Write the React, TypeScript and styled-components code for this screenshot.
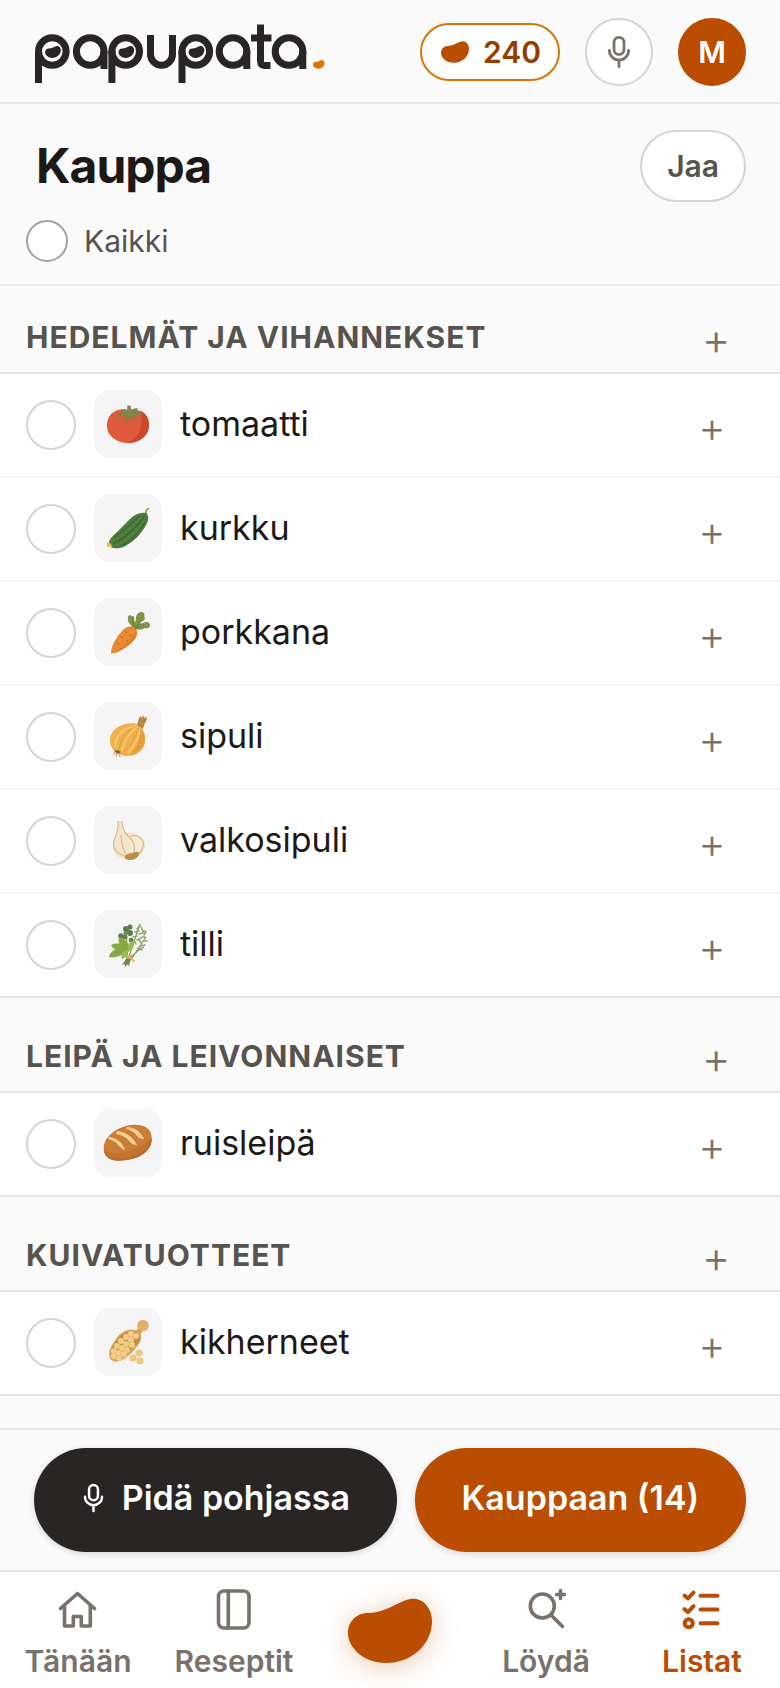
import React from "react";
import styled, { createGlobalStyle } from "styled-components";

const color = {
  page: "#fafafa",
  surface: "#ffffff",
  ink: "#1c1917",
  inkSoft: "#57534e",
  inkMuted: "#79716b",
  line: "#e5e5e5",
  lineFaint: "#f5f5f4",
  control: "#d6d3d1",
  brand: "#bb4d00",
  brandDark: "#973c00",
  amber: "#d97706",
  dark: "#292524",
};

const GlobalStyle = createGlobalStyle`
  *, *::before, *::after { box-sizing: border-box; }
  body {
    margin: 0;
    background: ${color.page};
    color: ${color.ink};
    font-family: Inter, "Noto Sans", sans-serif;
    -webkit-font-smoothing: antialiased;
  }
  h1, h2, ul { margin: 0; padding: 0; }
  button { font: inherit; cursor: pointer; }
`;

/* ---------- Layout ---------- */

const Screen = styled.div`
  display: flex;
  flex-direction: column;
  min-height: 100vh;
`;

const TopBar = styled.header`
  display: flex;
  align-items: center;
  justify-content: space-between;
  padding: 18px 34px 16px;
  border-bottom: 2px solid ${color.line};
`;

const TopActions = styled.div`
  display: flex;
  align-items: center;
  gap: 25px;
`;

const LogoLink = styled.a`
  display: block;
  line-height: 0;
`;

const PointsButton = styled.button`
  display: flex;
  align-items: center;
  gap: 14px;
  height: 58px;
  padding: 0 17px 0 19px;
  border: 2px solid ${color.amber};
  border-radius: 29px;
  background: ${color.surface};
  color: ${color.brandDark};
  font-size: 30px;
  font-weight: 600;
  line-height: 36px;
`;

const RoundButton = styled.button<{ $filled?: boolean }>`
  display: grid;
  place-items: center;
  width: 68px;
  height: 68px;
  padding: 0;
  border: 2px solid ${(p) => (p.$filled ? color.brand : color.control)};
  border-radius: 50%;
  background: ${(p) => (p.$filled ? color.brand : color.surface)};
  color: ${(p) => (p.$filled ? color.surface : color.inkMuted)};
  font-size: 30px;
  font-weight: 600;
  line-height: 36px;
`;

const TitleArea = styled.section`
  padding: 26px 34px 22px 26px;
  border-bottom: 2px solid #ececec;
`;

const TitleRow = styled.div`
  display: flex;
  align-items: center;
  justify-content: space-between;
  padding-left: 10px;
`;

const Title = styled.h1`
  font-size: 48px;
  font-weight: 700;
  line-height: 56px;
  letter-spacing: -1px;
`;

const ShareButton = styled.button`
  height: 72px;
  padding: 0 25px;
  border: 2px solid ${color.control};
  border-radius: 36px;
  background: ${color.surface};
  color: ${color.inkSoft};
  font-size: 30px;
  font-weight: 600;
  line-height: 36px;
`;

const SelectAll = styled.label`
  display: inline-flex;
  align-items: center;
  gap: 16px;
  margin-top: 18px;
  color: ${color.inkSoft};
  font-size: 30px;
  line-height: 42px;
  vertical-align: top;
`;

const Tick = styled.input<{ $small?: boolean }>`
  appearance: none;
  flex: none;
  width: ${(p) => (p.$small ? 42 : 50)}px;
  height: ${(p) => (p.$small ? 42 : 50)}px;
  margin: 0;
  border: 2px solid ${(p) => (p.$small ? "#a6a09b" : color.control)};
  border-radius: 50%;
  background: ${color.surface};
  &:checked { background: ${color.brand}; border-color: ${color.brand}; }
`;

const Main = styled.main`
  flex: 1;
`;

const GroupHeader = styled.div`
  display: flex;
  align-items: center;
  justify-content: space-between;
  padding: 38px 42px 15px 26px;
  border-bottom: 2px solid ${color.line};
  section:first-of-type > & { padding-top: 31px; }
`;

const GroupTitle = styled.h2`
  color: ${color.inkSoft};
  font-size: 30px;
  font-weight: 700;
  line-height: 36px;
  letter-spacing: 1px;
  text-transform: uppercase;
`;

const AddButton = styled.button<{ $large?: boolean }>`
  width: 44px;
  padding: 4px 0 0;
  border: 0;
  background: none;
  color: ${color.inkMuted};
  font-size: ${(p) => (p.$large ? 44 : 42)}px;
  font-weight: 300;
  line-height: 36px;
`;

const Items = styled.ul`
  list-style: none;
  background: ${color.surface};
`;

const Item = styled.li`
  display: flex;
  align-items: center;
  gap: 18px;
  height: 104px;
  padding: 0 46px 0 26px;
  border-bottom: 2px solid ${color.lineFaint};
  &:last-child { border-bottom-color: ${color.line}; }
`;

const ItemLabel = styled.label`
  flex: 1;
  display: flex;
  align-items: center;
  gap: 18px;
  padding-bottom: 2px;
  font-size: 34px;
  line-height: 44px;
`;

const Thumb = styled.span`
  width: 68px;
  height: 68px;
  border-radius: 16px;
  background: #f5f5f5;
  line-height: 0;
`;

const BottomDock = styled.div`
  position: sticky;
  bottom: 0;
  background: ${color.page};
`;

const ActionBar = styled.div`
  display: flex;
  gap: 18px;
  padding: 18px 34px;
  border-top: 2px solid ${color.line};
`;

const ActionButton = styled.button<{ $dark?: boolean }>`
  flex: 1 1 auto;
  display: flex;
  align-items: center;
  justify-content: center;
  gap: 16px;
  height: 104px;
  padding: 0 30px 4px;
  border: 0;
  border-radius: 52px;
  background: ${(p) => (p.$dark ? color.dark : color.brand)};
  color: ${color.surface};
  font-size: 34px;
  font-weight: 600;
  line-height: 44px;
  box-shadow: 0 2px 6px rgba(0, 0, 0, 0.14);
`;

const TabBar = styled.nav`
  display: grid;
  grid-template-columns: repeat(5, 1fr);
  overflow: hidden;
  background: ${color.surface};
  border-top: 2px solid ${color.line};
`;

const Tab = styled.a<{ $active?: boolean }>`
  display: flex;
  flex-direction: column;
  align-items: center;
  gap: 9px;
  padding: 14px 0 9px;
  color: ${(p) => (p.$active ? color.brand : color.inkMuted)};
  font-size: 30px;
  font-weight: 600;
  line-height: 36px;
  text-decoration: none;
`;

const BeanTab = styled.a`
  display: grid;
  place-items: center;
  padding-top: 2px;
  svg { filter: drop-shadow(0 4px 14px rgba(187, 77, 0, 0.3)); }
`;

/* ---------- Icons ---------- */

const BEAN =
  "M20 15 C34 15 46 7 57 2.500 C72 -4 84 8 84 23 C84 46 64 65 38 65 C16 65 0 50 0 35 C0 24 8 15 20 15 Z";

const Bean = ({ width, height }: { width: number; height: number }) => (
  <svg width={width} height={height} viewBox="0 0 84 66" fill={color.brand} aria-hidden="true">
    <path d={BEAN} />
  </svg>
);

const BowlRing = ({ x }: { x: number }) => <circle cx={x} cy="51.500" r="13.800" />;

const BeanSpot = ({ x }: { x: number }) => (
  <path d={BEAN} transform={`translate(${x - 7.2} 45.800) scale(.187)`} fill="currentColor" stroke="none" />
);

const Logo = () => (
  <svg width="292" height="64" viewBox="34 20 292 64" role="img" aria-label="papupata" color={color.dark}>
    <clipPath id="cup">
      <rect x="146" y="35" width="32" height="36" />
    </clipPath>
    <clipPath id="foot">
      <rect x="257" y="61" width="7" height="8" />
    </clipPath>
    <g fill="none" stroke="currentColor" strokeWidth="7">
      {[52.3, 125.7, 195.8].map((x) => (
        <g key={x}>
          <BowlRing x={x} />
          <line x1={x - 13.8} x2={x - 13.8} y1="51" y2="83" />
          <BeanSpot x={x} />
        </g>
      ))}
      {[90.2, 233, 289].map((x) => (
        <g key={x}>
          <BowlRing x={x} />
          <line x1={x + 13.8} x2={x + 13.8} y1="51" y2="69" />
        </g>
      ))}
      <rect x="150.500" y="10" width="22" height="55.300" rx="11" clipPath="url(#cup)" />
      <line x1="260.500" x2="260.500" y1="24.500" y2="62" />
      <line x1="251" x2="271.500" y1="38" y2="38" />
      <line x1="263.500" x2="270.500" y1="65.500" y2="65.500" />
      <circle cx="263.500" cy="62.500" r="3" strokeWidth="6.500" clipPath="url(#foot)" />
    </g>
    <path d={BEAN} transform="translate(313 59.800) scale(.137)" fill={color.amber} />
  </svg>
);

const Mic = ({ width, height }: { width: number; height: number }) => (
  <svg width={width} height={height} viewBox="4 0 28 36" fill="none" stroke="currentColor" strokeWidth="2.800" strokeLinecap="round" aria-hidden="true">
    <rect x="13" y="3.400" width="10" height="17" rx="5" />
    <path d="M8.400 16.500a9.600 9.600 0 0 0 19.200 0M18 26.500v6" />
  </svg>
);

const TabIcon = ({ children }: { children: React.ReactNode }) => (
  <svg width="48" height="48" viewBox="0 0 48 48" fill="none" stroke="currentColor" strokeWidth="3.600" strokeLinecap="round" strokeLinejoin="round" aria-hidden="true">
    {children}
  </svg>
);

const HomeIcon = () => (
  <TabIcon>
    <path d="M6.500 22.500 23.500 7.500l17 15M10.500 20v20h8.800V30.500h8V40h9V20" />
  </TabIcon>
);

const BookIcon = () => (
  <TabIcon>
    <rect x="8.500" y="5" width="30.500" height="37" rx="5.500" />
    <path d="M18.300 5v37" />
  </TabIcon>
);

const DiscoverIcon = () => (
  <TabIcon>
    <circle cx="20.300" cy="20" r="12" />
    <path d="M29.500 29.500 40.500 40.500M38.500 4.500v8M34.500 8.500h8" />
  </TabIcon>
);

const ListIcon = () => (
  <TabIcon>
    <g strokeWidth="4">
      <path d="M6.500 9.500l3.500 3 5.500-6M6.500 23.200l3.500 3 5.500-6M22.500 9.800h17M22.500 23.500h17M22.500 37.300h17" />
      <circle cx="10.700" cy="37.300" r="4" />
    </g>
  </TabIcon>
);

/* ---------- Food drawings ---------- */

const FoodSvg = ({ children }: { children: React.ReactNode }) => (
  <svg width="68" height="68" viewBox="0 0 68 68" aria-hidden="true">
    {children}
  </svg>
);

const Tomato = () => (
  <FoodSvg>
    <path d="M34 20c-6-2-21 0-21 16 0 10 10 17 21 17s21-7 21-18c0-14-14-17-21-15z" fill="#df5a3b" />
    <path d="M46 20.500c7 3 9 9 9 14.500 0 11-10 18-21 18 11-5 17-19 12-32.500z" fill="#cc482d" />
    <path d="M33.500 15.500h3l.5 4.500c3-1.500 5-2 7-1.500l-1.500 2.500c3 0 6 1 7 3.500-4-.5-6 0-7.500.5l-.5 1.500 1.500 4.500c-3-1-5-3-6-5l-5.500 8c-1-3 0-6 .5-8-4-.5-8 .5-11 2.500 1-4 5-6 8-6l-2-2.500c2-1 4-.5 6 .5z" fill="#7c8648" />
  </FoodSvg>
);

const Cucumber = () => (
  <FoodSvg>
    <path d="M52 20c0-4 0-4 3-5.500" stroke="#8fa15c" strokeWidth="1.800" fill="none" />
    <path d="M15 49c0-4 4-7 8-11l13-13c5-5 11-7 16-6 3 2 3 7 0 12-5 9-10 14-16 18-7 5-12 6-16 5-3 0-5-2-5-5z" fill="#4d7c3d" />
    <path d="M19 50c9-4 25-17 32-29M20 43c8-4 17-14 26-21M27 52c9-4 18-13 24-24" stroke="#386531" strokeWidth="1.100" fill="none" />
    <g stroke="#7da05d" strokeWidth="1" strokeDasharray="1 4" fill="none">
      <path d="M19 47c9-5 22-16 29-25" />
      <path d="M23 51c9-4 21-14 27-25" />
    </g>
    <path d="M13 48.500l4 1 1.500 4-4-1-1.500.5z" fill="#e3bd45" />
  </FoodSvg>
);

const Carrot = () => (
  <FoodSvg>
    <g fill="#82934a">
      <path d="M40 31c-2-4-7-6-6-10-1-3 2-5 4-3 2 0 3 2 2 4 2 3 2 6 2 9z" />
      <path d="M41 31c-1-5 1-8 1-11 0-4 3-6 5-6 3 0 4 2 3 4 2 3 0 5-3 6-2 3-3 5-5 7z" />
      <path d="M41 31c2-3 4-6 8-6 3-2 7-1 7 2 0 3-3 4-5 3-3 2-7 2-10 1z" />
    </g>
    <path d="M17 55.500c0-7 4-14 9-20 3-4 6-7 10-7 4-1 7 3 7 7-1 6-6 10-12 14-4 3-9 6-14 6z" fill="#e98b31" />
    <path d="M41 30c2 4 0 9-5 13-4 4-11 9-16 11.500 8-1 22-11 23-19 0-2-1-4.500-2-5.500z" fill="#dc7826" />
    <path d="M30 33l3 2M26 38l3 2M34 44l-2-2M23 45l2 1.500M38 39l-2-2" stroke="#c0651f" strokeWidth="1" strokeLinecap="round" />
    <path d="M41 31l6-9M41 31l9-4M40 29l-2-8" stroke="#64753a" strokeWidth=".8" />
  </FoodSvg>
);

const Onion = () => (
  <FoodSvg>
    <path d="M22 49l-3 4M23 50l-1 5M25 50l1 5M26 50l2 3" stroke="#a97e58" strokeWidth=".8" />
    <path d="M42 24c2-2 2-6 4-10l2 2 1-3 1 3 3-1c0 4-3 7-4 12z" fill="#b98543" />
    <path d="M42 21.500c-8-1-15 1-20 5-6 5-8 12-4 19 3 7 12 10 20 8 9-2 14-10 13-17 0-4-1-6-3-9z" fill="#f0b04c" />
    <path d="M48 27c3 5 3 8 3 10-1 9-7 15-15 16 7-6 11-15 12-26z" fill="#e39f3c" />
    <g fill="none" stroke="#f8c871" strokeWidth="1.800">
      <path d="M42 24c-12 1-21 10-21 21" />
      <path d="M44 24c-7 5-15 15-16 26" />
      <path d="M46 25c0 9-5 18-12 26" />
    </g>
    <path d="M43 24c-9 3-16 11-18 24M45 25c-3 9-8 18-15 25M47 26c0 9-2 17-9 25" fill="none" stroke="#d99434" strokeWidth=".6" />
    <path d="M20 49c2-1 5-1 7 1l-3 2z" fill="#8e6240" />
  </FoodSvg>
);

const Garlic = () => (
  <FoodSvg>
    <path d="M24 15h4c0 6 1 9 5 12 9-1 17 4 18 11 1 8-5 13-13 14-9 2-18-1-19-9-1-7 4-11 5-17 1-4 1-7 0-11z" fill="#f4e5c9" />
    <path d="M33 30c8-2 16 2 16 9 0 6-5 11-11 12z" fill="#f7ead3" />
    <g fill="none" stroke="#d3bb91" strokeWidth="1.200">
      <path d="M24 15c1 7-1 12-3 17-4 8 0 18 16 19" />
      <path d="M28 15c0 7 2 11 6 15 7 6 9 14 3 21" />
      <path d="M27 29c0 9 3 18 8 22" />
      <path d="M36 30c9-2 15 4 13 11-2 6-6 9-9 10" />
    </g>
    <path d="M31 51c1-3 5-4 8-4 3-1 5-2 6 0 0 4-4 7-8 7-3 0-6 0-6-3z" fill="#bd8e45" />
  </FoodSvg>
);

const Herbs = () => (
  <FoodSvg>
    <path d="M33 52c4-10 8-24 13-38M35 52c6-8 11-16 17-25M35 50c5-6 9-11 15-13M34 52c-1-10-1-20-2-32M35 51c-5-6-7-14-9-25" stroke="#81975b" strokeWidth="1.200" fill="none" />
    <g stroke="#8fa56b" strokeWidth="1.600" strokeLinecap="round">
      <path d="M46 15l-3 4M47 17l2 4M45 21l-4 1M45 24l4-1M43 26l-4 1M43 30l4-2M51 27l-3 0M50 31l3 0M47 33l-2-3M47 36l4-1M44 38l4 2M49 22l2-1M42 34l-2-4M50 25l2-3" />
    </g>
    <g fill="#5e7d4c">
      <circle cx="32" cy="19" r="3" />
      <circle cx="36" cy="17" r="2.500" />
      <circle cx="36" cy="23" r="3" />
      <circle cx="27" cy="26" r="2.800" />
      <circle cx="31" cy="27" r="2.500" />
      <circle cx="37" cy="30" r="2.300" />
      <circle cx="31" cy="23" r="1.500" />
    </g>
    <g fill="#86a946">
      <path d="M35 42c-6-2-12-6-10-15 7 2 11 7 10 15z" />
      <path d="M33 40c-6 2-13 1-16-5 6-3 14-1 16 5z" />
      <path d="M32 40c-3 6-10 8-17 7 1-7 10-11 17-7z" />
      <path d="M34 40c0 5-2 8-6 9-2-5 1-8 6-9z" fill="#9abb55" />
      <path d="M35 41c-3-5-1-8 3-10 3 4 2 8-3 10z" fill="#9abb55" />
    </g>
    <path d="M34 46l-6 9 3-1 0 3 3-3 1 3 2-11z" fill="#6c8a4c" />
    <path d="M33 46l5 3M38 45l-4 3M36 48l4 3" stroke="#e2b06a" strokeWidth="1.800" strokeLinecap="round" />
  </FoodSvg>
);

const Bread = () => (
  <FoodSvg>
    <path d="M10 42c-2-9 5-17 14-22 10-5 22-6 29-1 5 3 6 12 3 18-4 8-14 13-25 14-11 2-20-1-21-9z" fill="#cb7c35" />
    <path d="M10 42c14 6 36 0 48-13 0 12-10 20-25 22-13 2-21 0-23-9z" fill="#b96c2c" />
    <path d="M11 36c-1 6 4 9 12 9 13 0 28-7 33-16 1 5-2 9-7 13-8 6-18 8-26 7-9 0-14-4-12-13z" fill="#c27231" />
    <g fill="#f7cf93">
      <path d="M15 28c8 1 14 6 16 13-3-1-4-2-6-4-3-4-6-6-11-7z" />
      <path d="M23 22c9 1 16 6 20 14-3 0-5-1-7-3-4-5-8-7-14-8z" />
      <path d="M33 18c8 0 14 5 17 12-3 0-5-1-7-3-3-4-6-6-11-7z" />
    </g>
  </FoodSvg>
);

const CHICKPEAS: [number, number][] = [
  [37, 26], [42, 28], [32, 29], [37, 32], [27, 33], [32, 36], [38, 37],
  [23, 38], [28, 40], [33, 42], [20, 43], [25, 45], [30, 46], [20, 48], [25, 50],
];

const LOOSE_CHICKPEAS: [number, number][] = [[45, 45], [39, 50], [46, 53]];

const Chickpeas = () => (
  <FoodSvg>
    <path d="M41 24l4-5 4 4-4 5z" fill="#d9a056" />
    <circle cx="49" cy="17.500" r="5.800" fill="#dfae69" />
    <path d="M29 24c6-4 14-3 17 1 3 5 0 11-5 16-6 7-15 15-22 12-6-3-4-11-1-16s6-10 11-13z" fill="#dca45b" />
    <path d="M31 25c5-3 11-2 14 1 2 4 0 9-5 13-6 6-14 12-20 10-5-3-2-10 1-14s5-8 10-10z" fill="#bd8745" />
    {CHICKPEAS.map(([x, y]) => (
      <circle key={`${x}-${y}`} cx={x} cy={y} r="3" fill="#f3cf8a" stroke="#e6b76c" strokeWidth=".5" />
    ))}
    {LOOSE_CHICKPEAS.map(([x, y]) => (
      <circle key={x} cx={x} cy={y} r="3.300" fill="#f3ca82" stroke="#e3b26a" strokeWidth=".5" />
    ))}
  </FoodSvg>
);

/* ---------- Content ---------- */

const GROUPS = [
  {
    title: "Hedelmät ja vihannekset",
    items: [
      { name: "tomaatti", Picture: Tomato },
      { name: "kurkku", Picture: Cucumber },
      { name: "porkkana", Picture: Carrot },
      { name: "sipuli", Picture: Onion },
      { name: "valkosipuli", Picture: Garlic },
      { name: "tilli", Picture: Herbs },
    ],
  },
  { title: "Leipä ja leivonnaiset", items: [{ name: "ruisleipä", Picture: Bread }] },
  { title: "Kuivatuotteet", items: [{ name: "kikherneet", Picture: Chickpeas }] },
];

export default function App() {
  return (
    <Screen>
      <GlobalStyle />
      <TopBar>
        <LogoLink href="#etusivu">
          <Logo />
        </LogoLink>
        <TopActions>
          <PointsButton type="button">
            <Bean width={28} height={22} />
            240
          </PointsButton>
          <RoundButton type="button" aria-label="Puhu">
            <Mic width={28} height={36} />
          </RoundButton>
          <RoundButton type="button" $filled>
            M
          </RoundButton>
        </TopActions>
      </TopBar>
      <TitleArea>
        <TitleRow>
          <Title>Kauppa</Title>
          <ShareButton type="button">Jaa</ShareButton>
        </TitleRow>
        <SelectAll>
          <Tick type="checkbox" $small />
          Kaikki
        </SelectAll>
      </TitleArea>
      <Main>
        {GROUPS.map((group) => (
          <section key={group.title}>
            <GroupHeader>
              <GroupTitle>{group.title}</GroupTitle>
              <AddButton type="button" $large>
                +
              </AddButton>
            </GroupHeader>
            <Items>
              {group.items.map(({ name, Picture }) => (
                <Item key={name}>
                  <Tick type="checkbox" id={name} />
                  <ItemLabel htmlFor={name}>
                    <Thumb>
                      <Picture />
                    </Thumb>
                    {name}
                  </ItemLabel>
                  <AddButton type="button">+</AddButton>
                </Item>
              ))}
            </Items>
          </section>
        ))}
      </Main>
      <BottomDock>
        <ActionBar>
          <ActionButton type="button" $dark>
            <Mic width={25} height={32} />
            Pidä pohjassa
          </ActionButton>
          <ActionButton type="button">Kauppaan (14)</ActionButton>
        </ActionBar>
        <TabBar>
          <Tab href="#tanaan">
            <HomeIcon />
            Tänään
          </Tab>
          <Tab href="#reseptit">
            <BookIcon />
            Reseptit
          </Tab>
          <BeanTab href="#papu" aria-label="Papu">
            <Bean width={84} height={66} />
          </BeanTab>
          <Tab href="#loyda">
            <DiscoverIcon />
            Löydä
          </Tab>
          <Tab href="#listat" $active aria-current="page">
            <ListIcon />
            Listat
          </Tab>
        </TabBar>
      </BottomDock>
    </Screen>
  );
}
